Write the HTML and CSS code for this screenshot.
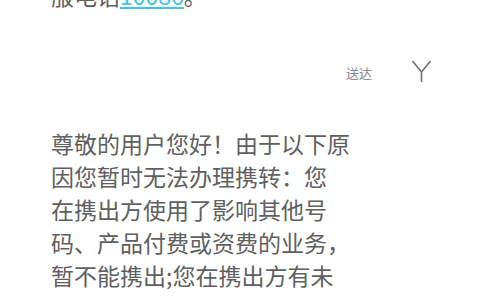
FILE: index.html
```html
<!DOCTYPE html>
<html lang="zh-CN">
<head>
  <meta charset="UTF-8">
  <meta name="viewport" content="width=device-width, initial-scale=1.0">
  <title>短信</title>
  <link rel="stylesheet" href="styles.css">
</head>
<body>

  <!-- previous message (scrolled off the top) -->
  <div class="bubble prev">服电话<a class="num" href="#">10086</a>。</div>

  <!-- delivery status -->
  <div class="status">
    <span class="status-text">送达</span>
    <svg class="status-icon" width="22" height="24" viewBox="0 0 22 24">
      <path d="M1.5 1 L10.5 12 L19.5 1 M10.5 12 L10.5 22" fill="none" stroke="#707070" stroke-width="1.6"/>
    </svg>
  </div>

  <!-- incoming message -->
  <div class="bubble msg">
    尊敬的用户您好！由于以下原<br>
    因您暂时无法办理携转：您<br>
    在携出方使用了影响其他号<br>
    码、产品付费或资费的业务，<br>
    暂不能携出;您在携出方有未
  </div>

</body>
</html>
```

FILE: styles.css
```css
* {
  margin: 0;
  padding: 0;
  box-sizing: border-box;
}

body {
  font-family: "Noto Sans CJK SC", "Noto Sans", sans-serif;
  background: #fff;
  color: #606060;
  width: 480px;
  height: 300px;
  overflow: hidden;
}

.bubble {
  padding-left: 51px;
  font-size: 23px;
  line-height: 33px;
  white-space: nowrap;
}

.prev {
  margin-top: -21px;
}

.num {
  color: #3fc3e3;
  text-decoration: underline;
}

/* Delivery status row */
.status {
  display: flex;
  justify-content: flex-end;
  align-items: center;
  gap: 39px;
  padding-right: 47px;
  margin-top: 47px;
  height: 26px;
}

.status-text {
  font-size: 13px;
  color: #888;
}

.status-icon {
  display: block;
}

.msg {
  margin-top: 42px;
}
```
